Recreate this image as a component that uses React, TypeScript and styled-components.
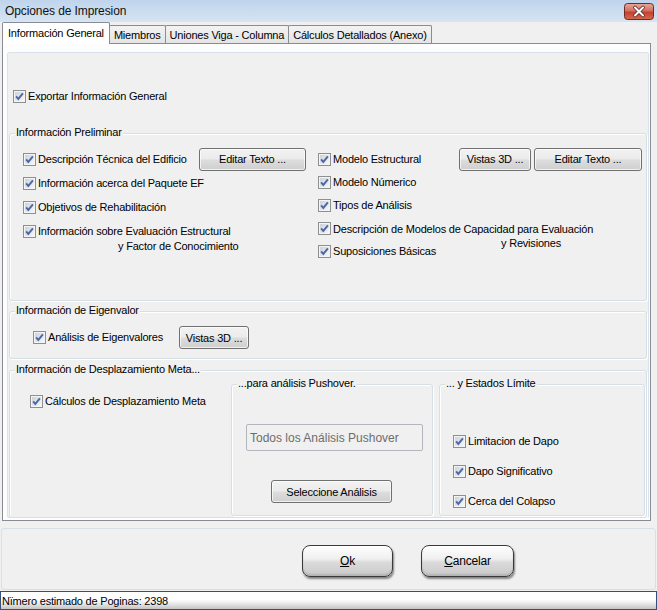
import { FC, ReactNode } from 'react';
import styled, { createGlobalStyle } from 'styled-components';

const GlobalStyle = createGlobalStyle`
	html, body {
		margin: 0;
		padding: 0;
		background: #f0f0f0;
	}
	body {
		font-family: "Liberation Sans", Arial, sans-serif;
		font-size: 11px;
		letter-spacing: -0.2px;
		color: #000;
	}
	* {
		box-sizing: border-box;
	}
`;

const CheckBox: FC = () => (
	<CheckSvg width='13' height='13' viewBox='0 0 13 13'>
		<defs>
			<linearGradient id='cbFill' x1='0' y1='0' x2='1' y2='1'>
				<stop offset='0' stopColor='#cdd2da' />
				<stop offset='1' stopColor='#f7f7f7' />
			</linearGradient>
		</defs>
		<rect x='0.5' y='0.5' width='12' height='12' fill='#f4f4f4' stroke='#8e8f8f' />
		<rect x='2' y='2' width='9' height='9' fill='url(#cbFill)' />
		<path d='M3.1 6.3 L5.3 8.9 L9.9 3.3' fill='none' stroke='#4b68a8' strokeWidth='1.9' />
	</CheckSvg>
);

interface CheckProps {
	children: ReactNode;
	sub?: string;
	indent?: number;
	lh?: number;
}

const Check: FC<CheckProps> = ({ children, sub, indent = 0, lh = 15 }) => (
	<CheckItem>
		<CheckBox />
		<CheckLabel $lh={lh}>
			{children}
			{sub && <SubLine $indent={indent}>{sub}</SubLine>}
		</CheckLabel>
	</CheckItem>
);

export default function App() {
	return (
		<Window>
			<GlobalStyle />
			<TitleBar>
				<TitleText>Opciones de Impresion</TitleText>
				<CloseButton width='30' height='17' viewBox='0 0 30 17'>
					<defs>
						<linearGradient id='closeFill' x1='0' y1='0' x2='0' y2='1'>
							<stop offset='0' stopColor='#e9a99c' />
							<stop offset='0.45' stopColor='#d5705f' />
							<stop offset='0.55' stopColor='#c4412e' />
							<stop offset='1' stopColor='#d86a4f' />
						</linearGradient>
					</defs>
					<rect x='0.5' y='0.5' width='29' height='16' rx='3' fill='url(#closeFill)' stroke='#6f2b22' />
					<path d='M11 4.5 L19 12.5 M19 4.5 L11 12.5' stroke='#5a2a26' strokeWidth='3.6' strokeLinecap='round' />
					<path d='M11 4.5 L19 12.5 M19 4.5 L11 12.5' stroke='#fff' strokeWidth='2' strokeLinecap='round' />
				</CloseButton>
			</TitleBar>

			<TabStrip>
				<Tab $active>Información General</Tab>
				<Tab>Miembros</Tab>
				<Tab>Uniones Viga - Columna</Tab>
				<Tab>Cálculos Detallados (Anexo)</Tab>
			</TabStrip>

			<TabPanel>
				<Inner>
					<ExportRow>
						<Check>Exportar Información General</Check>
					</ExportRow>

					<Group $h={168}>
						<Legend>Información Preliminar</Legend>
						<PrelimGrid>
							<LeftCol>
								<Row $h={24}>
									<Check>Descripción Técnica del Edificio</Check>
									<PushButton $w={107}>Editar Texto ...</PushButton>
								</Row>
								<Row $h={24}>
									<Check>Información acerca del Paquete EF</Check>
								</Row>
								<Row $h={24}>
									<Check>Objetivos de Rehabilitación</Check>
								</Row>
								<Row $h={24}>
									<Check sub='y Factor de Conocimiento' indent={80}>
										Información sobre Evaluación Estructural
									</Check>
								</Row>
							</LeftCol>
							<RightCol>
								<Row $h={24}>
									<Check>Modelo Estructural</Check>
									<ButtonPair>
										<PushButton $w={72}>Vistas 3D ...</PushButton>
										<PushButton $w={108}>Editar Texto ...</PushButton>
									</ButtonPair>
								</Row>
								<Row $h={23}>
									<Check>Modelo Númerico</Check>
								</Row>
								<Row $h={23}>
									<Check>Tipos de Análisis</Check>
								</Row>
								<Row $h={23}>
									<Check sub='y Revisiones' indent={168} lh={14}>
										Descripción de Modelos de Capacidad para Evaluación
									</Check>
								</Row>
								<Row $h={23}>
									<Check>Suposiciones Básicas</Check>
								</Row>
							</RightCol>
						</PrelimGrid>
					</Group>

					<Group $h={48} $gap={10}>
						<Legend>Información de Eigenvalor</Legend>
						<EigenRow>
							<Check>Análisis de Eigenvalores</Check>
							<PushButton $w={70}>Vistas 3D ...</PushButton>
						</EigenRow>
					</Group>

					<Group $h={148} $gap={11}>
						<Legend>Información de Desplazamiento Meta...</Legend>
						<TargetBody>
							<TargetLeft>
								<Check>Cálculos de Desplazamiento Meta</Check>
							</TargetLeft>
							<SubGroup $w={202}>
								<Legend>...para análisis Pushover.</Legend>
								<PushoverBody>
									<DisabledField>Todos los Análisis Pushover</DisabledField>
									<SelectButton $w={121}>Seleccione Análisis</SelectButton>
								</PushoverBody>
							</SubGroup>
							<SubGroup $w={206}>
								<Legend>... y Estados Límite</Legend>
								<LimitBody>
									<Check>Limitacion de Dapo</Check>
									<Check>Dapo Significativo</Check>
									<Check>Cerca del Colapso</Check>
								</LimitBody>
							</SubGroup>
						</TargetBody>
					</Group>
				</Inner>
			</TabPanel>

			<ButtonBar>
				<DialogButton>
					<u>O</u>k
				</DialogButton>
				<DialogButton $w={93}>
					<u>C</u>ancelar
				</DialogButton>
			</ButtonBar>

			<StatusBar>Nïmero estimado de Poginas: 2398</StatusBar>
		</Window>
	);
}

const Window = styled.div`
	width: 657px;
	height: 610px;
	display: flex;
	flex-direction: column;
	background: #f0f0f0;
	overflow: hidden;
`;

const TitleBar = styled.div`
	height: 22px;
	flex-shrink: 0;
	display: flex;
	align-items: center;
	justify-content: space-between;
	padding: 0 3px 0 5px;
	background: linear-gradient(#bfd4ec, #d6e4f3);
`;

const TitleText = styled.span`
	font-size: 12px;
	letter-spacing: -0.1px;
	color: #111;
`;

const CloseButton = styled.svg`
	display: block;
`;

const TabStrip = styled.div`
	height: 21px;
	flex-shrink: 0;
	display: flex;
	align-items: flex-end;
	padding-left: 2px;
	position: relative;
	z-index: 1;
`;

const Tab = styled.div<{ $active?: boolean }>`
	height: ${(p) => (p.$active ? 22 : 18)}px;
	margin-bottom: ${(p) => (p.$active ? -1 : 0)}px;
	margin-left: ${(p) => (p.$active ? 0 : -1)}px;
	padding: 0 ${(p) => (p.$active ? 5 : 4)}px ${(p) => (p.$active ? 2 : 0)}px;
	display: flex;
	align-items: center;
	border: 1px solid #898c95;
	border-bottom: none;
	border-radius: 2px 2px 0 0;
	background: ${(p) => (p.$active ? '#fff' : 'linear-gradient(#f3f3f3, #e4e4e4)')};
	position: relative;
	z-index: ${(p) => (p.$active ? 2 : 1)};
	white-space: nowrap;
	&:first-child {
		margin-left: 0;
	}
`;

const TabPanel = styled.div`
	height: 478px;
	flex-shrink: 0;
	margin: 0 6px 0 2px;
	padding: 8px 1px 2px 4px;
	border: 1px solid #898c95;
	background: #fdfdfd;
	display: flex;
`;

const Inner = styled.div`
	flex: 1;
	display: flex;
	flex-direction: column;
	padding: 0 1px;
	border: 1px solid #d9e2ea;
	border-radius: 2px;
	background: #f0f0f0;
`;

const ExportRow = styled.div`
	height: 80px;
	flex-shrink: 0;
	display: flex;
	align-items: flex-start;
	padding: 36px 0 0 4px;
`;

const Group = styled.div<{ $h: number; $gap?: number }>`
	position: relative;
	height: ${(p) => p.$h}px;
	flex-shrink: 0;
	margin-top: ${(p) => p.$gap ?? 0}px;
	border: 1px solid #d5dfe6;
	border-radius: 3px;
	box-shadow: inset 1px 1px 0 #fff, 1px 1px 0 #fff;
`;

const SubGroup = styled(Group)<{ $w: number }>`
	width: ${(p) => p.$w}px;
	height: 132px;
	margin-top: 0;
`;

const Legend = styled.span`
	position: absolute;
	top: -9px;
	left: 5px;
	padding: 0 1px;
	line-height: 14px;
	background: #f0f0f0;
	white-space: nowrap;
`;

const PrelimGrid = styled.div`
	display: grid;
	grid-template-columns: 295px 1fr;
	padding: 13px 4px 0 13px;
`;

const LeftCol = styled.div`
	display: flex;
	flex-direction: column;
	padding-right: 12px;
`;

const RightCol = styled.div`
	display: flex;
	flex-direction: column;
`;

const Row = styled.div<{ $h: number }>`
	height: ${(p) => p.$h}px;
	display: flex;
	align-items: center;
	justify-content: space-between;
`;

const ButtonPair = styled.div`
	display: flex;
	gap: 3px;
`;

const CheckItem = styled.div`
	display: flex;
	align-items: center;
	gap: 2px;
	white-space: nowrap;
`;

const CheckSvg = styled.svg`
	display: block;
	flex-shrink: 0;
`;

const CheckLabel = styled.span<{ $lh: number }>`
	line-height: ${(p) => p.$lh}px;
`;

const SubLine = styled.span<{ $indent: number }>`
	display: block;
	height: 0;
	padding-left: ${(p) => p.$indent}px;
`;

const PushButton = styled.div<{ $w: number }>`
	width: ${(p) => p.$w}px;
	height: 23px;
	flex-shrink: 0;
	display: flex;
	align-items: center;
	justify-content: center;
	border: 1px solid #707070;
	border-radius: 3px;
	background: linear-gradient(#f2f2f2 0%, #ebebeb 48%, #dddddd 52%, #cfcfcf 100%);
	box-shadow: inset 0 0 0 1px rgba(255, 255, 255, 0.7);
	white-space: nowrap;
`;

const EigenRow = styled.div`
	display: grid;
	grid-template-columns: 146px auto;
	align-items: center;
	justify-content: start;
	padding: 14px 0 0 23px;
`;

const TargetBody = styled.div`
	display: flex;
	gap: 6px;
	padding: 13px 0 0 20px;
`;

const TargetLeft = styled.div`
	width: 195px;
	padding-top: 10px;
`;

const PushoverBody = styled.div`
	display: flex;
	flex-direction: column;
	align-items: flex-start;
	padding-top: 39px;
`;

const DisabledField = styled.div`
	width: 177px;
	height: 27px;
	margin-left: 14px;
	padding-left: 3px;
	display: flex;
	align-items: center;
	font-size: 12px;
	letter-spacing: 0;
	color: #6d6d6d;
	border: 1px solid #b3b6bd;
	border-radius: 2px;
	background: #f0f0f0;
	white-space: nowrap;
`;

const SelectButton = styled(PushButton)`
	margin: 29px 0 0 39px;
`;

const LimitBody = styled.div`
	display: flex;
	flex-direction: column;
	gap: 14px;
	padding: 48px 0 0 13px;
	& > * {
		height: 16px;
	}
`;

const ButtonBar = styled.div`
	height: 62px;
	flex-shrink: 0;
	margin: 7px 1px 0;
	display: flex;
	align-items: flex-start;
	gap: 28px;
	padding: 16px 0 0 300px;
	border: 1px solid #d8dfe7;
	border-radius: 3px;
	background: #f0f0f0;
`;

const DialogButton = styled.div<{ $w?: number }>`
	width: ${(p) => p.$w ?? 91}px;
	height: 32px;
	display: flex;
	align-items: center;
	justify-content: center;
	font-size: 12px;
	color: #000;
	border: 1px solid #3a3a3a;
	border-radius: 8px;
	background: linear-gradient(#fefefe 0%, #f0f0f0 42%, #dadada 55%, #cacaca 100%);
	box-shadow: inset 0 1px 0 #fff, inset 0 -2px 2px rgba(0, 0, 0, 0.12), 1px 2px 2px rgba(0, 0, 0, 0.45);
`;

const StatusBar = styled.div`
	height: 19px;
	flex-shrink: 0;
	margin-top: 1px;
	padding: 0 1px;
	display: flex;
	align-items: center;
	border: 1px solid #34507f;
	background: linear-gradient(#ffffff 0%, #ffffff 45%, #e6e6e6 70%, #c4c4c4 100%);
	white-space: nowrap;
`;
